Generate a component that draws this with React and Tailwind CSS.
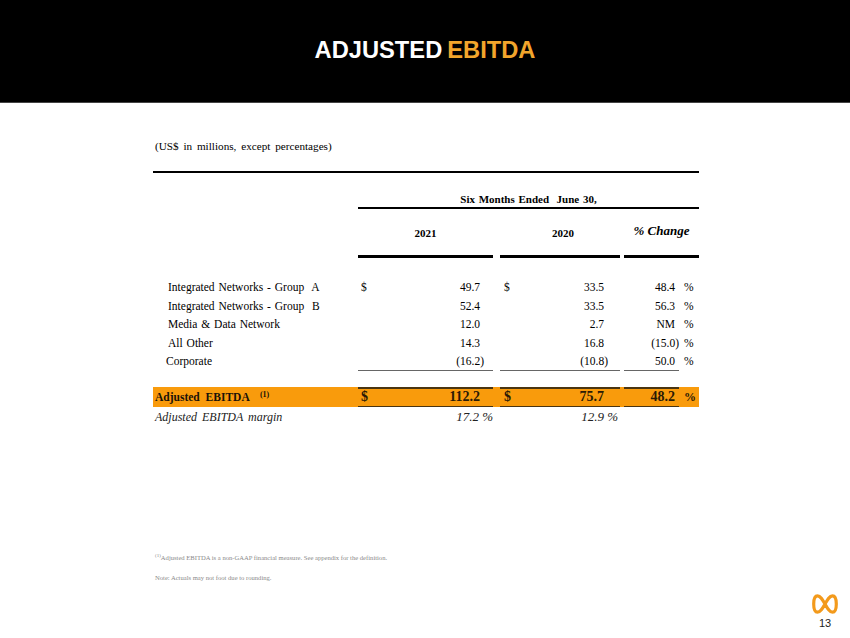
import React from "react";

const serif = { fontFamily: '"Liberation Serif", "Times New Roman", serif' };

const rows = [
  { label: "Integrated Networks - Group  A", dollar: true, a: "49.7", b: "33.5", c: "48.4" },
  { label: "Integrated Networks - Group  B", a: "52.4", b: "33.5", c: "56.3" },
  { label: "Media & Data Network", a: "12.0", b: "2.7", c: "NM" },
  { label: "All Other", a: "14.3", b: "16.8", c: "(15.0)" },
  { label: "Corporate", a: "(16.2)", b: "(10.8)", c: "50.0", last: true, pad: "pl-[13px]" },
];

// right aligned number, closing paren hangs past the column edge
function Num({ v }) {
  if (v.endsWith(")")) {
    return (
      <span className="flex">
        <span>{v.slice(0, -1)}</span>
        <span className="-mr-[4px]">)</span>
      </span>
    );
  }
  return <span>{v}</span>;
}

function Logo() {
  return (
    <svg width="26" height="22" viewBox="0 0 26 22" fill="none">
      <path
        d="M13 11 C15.5 6.5 17.5 2.8 20.5 2.8 C23.5 2.8 24.3 6.5 24.3 11 C24.3 15.5 23.5 19.2 20.5 19.2 C17.5 19.2 15.5 15.5 13 11 C10.5 6.5 8.5 2.8 5.5 2.8 C2.5 2.8 1.7 6.5 1.7 11 C1.7 15.5 2.5 19.2 5.5 19.2 C8.5 19.2 10.5 15.5 13 11 Z"
        stroke="#f39a1c"
        strokeWidth="3.2"
        strokeLinejoin="round"
      />
    </svg>
  );
}

export default function App() {
  const grid = "grid grid-cols-[205px_135px_7px_120px_4px_55px_20px]";

  return (
    <div className="w-[850px] h-[638px] bg-white flex flex-col text-black" style={serif}>
      <div className="h-[103px] bg-black flex items-center justify-center border-b border-[#444]">
        <h1
          className="flex text-[23.7px] font-bold text-white"
          style={{ fontFamily: '"Liberation Sans", Arial, sans-serif' }}
        >
          <span>ADJUSTED</span>
          <span className="ml-[5px] text-[#f2a52c]">EBITDA</span>
        </h1>
      </div>

      <div className="pl-[153px] w-[699px]">
        <div className="mt-[36px] pl-[2px] text-[11.2px] leading-[14px] [word-spacing:2px]">
          (US$ in millions, except percentages)
        </div>

        <div className="mt-[18px] border-t-[2px] border-black" />

        {/* column heading */}
        <div className={grid}>
          <div className="col-span-1" />
          <div className="col-span-6 h-[36px] flex items-end justify-center pb-[1px] border-b-[2px] border-black text-[11px] leading-[14px] font-bold [word-spacing:1px]">
            Six Months Ended &nbsp;June 30,
          </div>
        </div>
        <div className={`${grid} h-[49px]`}>
          <div />
          <div className="border-b-[3px] border-black flex items-center justify-center text-[11px] font-bold pt-[2px]">2021</div>
          <div />
          <div className="border-b-[3px] border-black flex items-center justify-center text-[11px] font-bold pt-[2px] pl-[6px]">2020</div>
          <div />
          <div className="col-span-2 border-b-[3px] border-black flex items-center justify-center text-[13px] font-bold italic pb-[3px]">
            % Change
          </div>
        </div>

        {/* body rows */}
        <div className="mt-[20px] text-[11.5px]">
          {rows.map((r) => (
            <div key={r.label} className={`${grid} h-[18.6px] leading-[18px]`}>
              <div className={`${r.pad || "pl-[15px]"} whitespace-pre [word-spacing:1px]`}>{r.label}</div>
              <div className={`flex justify-between pl-[3px] pr-[13px] ${r.last ? "border-b border-[#666]" : ""}`}>
                <span>{r.dollar ? "$" : ""}</span>
                <Num v={r.a} />
              </div>
              <div />
              <div className={`flex justify-between pl-[4px] pr-[16px] ${r.last ? "border-b border-[#666]" : ""}`}>
                <span>{r.dollar ? "$" : ""}</span>
                <Num v={r.b} />
              </div>
              <div />
              <div className={`flex justify-end pr-[4px] ${r.last ? "border-b border-[#666]" : ""}`}>
                <Num v={r.c} />
              </div>
              <div className="pl-[5px]">%</div>
            </div>
          ))}
        </div>

        {/* total row */}
        <div className={`${grid} grid-rows-[20px] mt-[16px] h-[20px] bg-[#f99b0c] font-bold text-[#2a1a05]`}>
          <div className="pl-[2px] text-[11.5px] leading-[20px] [word-spacing:3px] text-[#1a1208]">
            Adjusted EBITDA <sup className="text-[8px] ml-[5px]">(1)</sup>
          </div>
          <div className="flex justify-between items-center pl-[3px] pr-[13px] border-t-[2px] border-b border-[#4a3410] text-[14px] leading-[16px]">
            <span>$</span>
            <span>112.2</span>
          </div>
          <div />
          <div className="flex justify-between items-center pl-[4px] pr-[16px] border-t-[2px] border-b border-[#4a3410] text-[14px] leading-[16px]">
            <span>$</span>
            <span>75.7</span>
          </div>
          <div />
          <div className="flex justify-end items-center pr-[4px] border-t-[2px] border-b border-[#4a3410] text-[14px] leading-[16px]">
            48.2
          </div>
          <div className="pl-[5px] text-[12px] leading-[20px]">%</div>
        </div>

        {/* margin row */}
        <div className={`${grid} grid-rows-[20px] h-[20px] leading-[20px] italic text-[#222]`}>
          <div className="pl-[2px] text-[12px] [word-spacing:2px]">Adjusted EBITDA margin</div>
          <div className="text-right text-[13px]">17.2 %</div>
          <div />
          <div className="text-right text-[13px] pr-[2px]">12.9 %</div>
          <div />
          <div />
          <div />
        </div>
      </div>

      {/* footnotes */}
      <div className="mt-[126px] pl-[155px] text-[6.6px] leading-[10px] text-[#8a8a8a]">
        <div>
          <sup className="text-[5px]">(1)</sup>Adjusted EBITDA is a non-GAAP financial measure. See appendix for the definition.
        </div>
        <div className="mt-[10px]">Note: Actuals may not foot due to rounding.</div>
      </div>

      <div className="mt-auto flex justify-end pr-[12px] pb-[8px]">
        <div className="flex flex-col items-center">
          <Logo />
          <span
            className="mt-[2px] text-[11px] leading-[13px] text-[#222]"
            style={{ fontFamily: '"Liberation Sans", Arial, sans-serif' }}
          >
            13
          </span>
        </div>
      </div>
    </div>
  );
}
